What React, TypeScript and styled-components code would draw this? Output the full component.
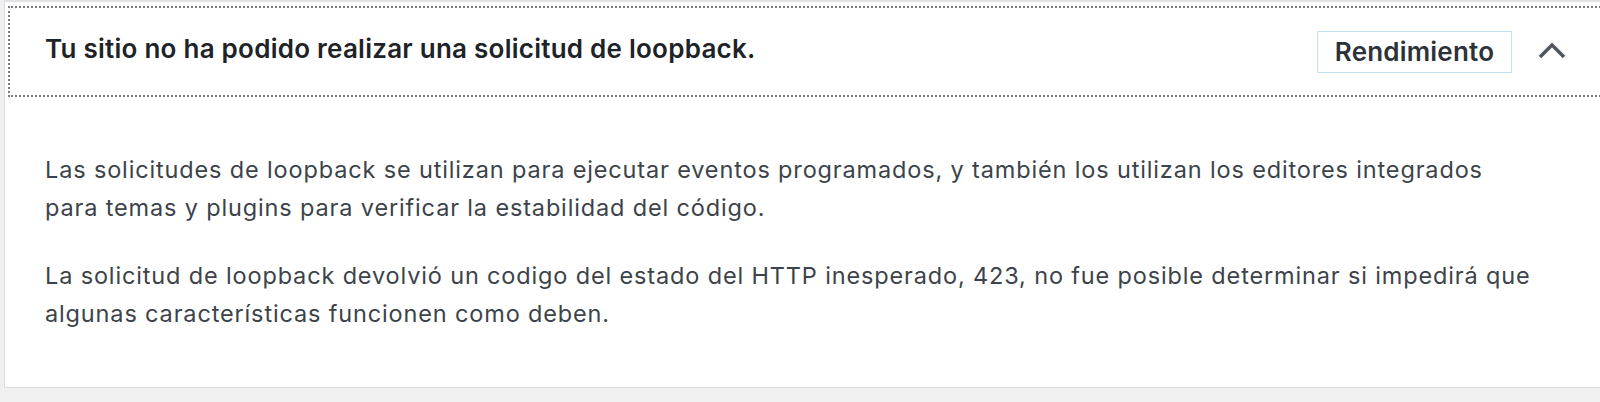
import React, { useState } from 'react';
import styled, { createGlobalStyle } from 'styled-components';

const GlobalStyle = createGlobalStyle`
  html, body {
    margin: 0;
    padding: 0;
    background: #f0f0f1;
    overflow: hidden;
  }
  body {
    font-family: Inter, "Noto Sans", "Liberation Sans", sans-serif;
    -webkit-font-smoothing: antialiased;
  }
`;

const Page = styled.div`
  padding-left: 4px;
  height: 402px;
  box-sizing: border-box;
`;

const Item = styled.section`
  background: #fff;
  border-top: 2px solid #e2e2e5;
  border-left: 1px solid #dcdcde;
  border-bottom: 1px solid #dcdcde;
  margin-right: -12px;
`;

const Trigger = styled.button`
  display: flex;
  align-items: center;
  width: calc(100% - 3px);
  margin: 4px 0 0 3px;
  height: 91px;
  box-sizing: border-box;
  padding: 0 44px 0 35px;
  background: #fff;
  border: 2px dotted #787c82;
  cursor: pointer;
  font-family: inherit;
  text-align: left;
`;

const Title = styled.span`
  flex: 1;
  font-size: 26px;
  letter-spacing: 0.25px;
  font-weight: 600;
  color: #1d2327;
  margin-top: -6px;
`;

const Badge = styled.span`
  display: inline-flex;
  align-items: center;
  justify-content: center;
  width: 195px;
  height: 42px;
  box-sizing: border-box;
  border: 1px solid #bfe3f1;
  font-size: 26px;
  letter-spacing: 0.2px;
  font-weight: 600;
  color: #2c3338;
  margin-right: 26px;
`;

const Chevron = styled.svg<{ $open: boolean }>`
  width: 28px;
  height: 18px;
  margin-top: -4px;
  transform: ${(p) => (p.$open ? 'none' : 'rotate(180deg)')};
`;

const Panel = styled.div`
  padding: 54px 80px 55px 40px;
  p {
    margin: 0;
    font-size: 23.5px;
    letter-spacing: 0.85px;
    line-height: 37.5px;
    color: #3c434a;
  }
  p + p {
    margin-top: 31px;
  }
`;

export default function App() {
  const [open, setOpen] = useState(true);
  return (
    <Page>
      <GlobalStyle />
      <Item>
        <Trigger onClick={() => setOpen(!open)} aria-expanded={open}>
          <Title>Tu sitio no ha podido realizar una solicitud de loopback.</Title>
          <Badge>Rendimiento</Badge>
          <Chevron $open={open} viewBox="0 0 28 18">
            <path d="M2 16 L14 4 L26 16" fill="none" stroke="#50575e" strokeWidth="3.5" />
          </Chevron>
        </Trigger>
        {open && (
          <Panel>
            <p>
              Las solicitudes de loopback se utilizan para ejecutar eventos programados, y también los utilizan los editores integrados para temas y plugins para verificar la estabilidad del código.
            </p>
            <p>
              La solicitud de loopback devolvió un codigo del estado del HTTP inesperado, 423, no fue posible determinar si impedirá que algunas características funcionen como deben.
            </p>
          </Panel>
        )}
      </Item>
    </Page>
  );
}
